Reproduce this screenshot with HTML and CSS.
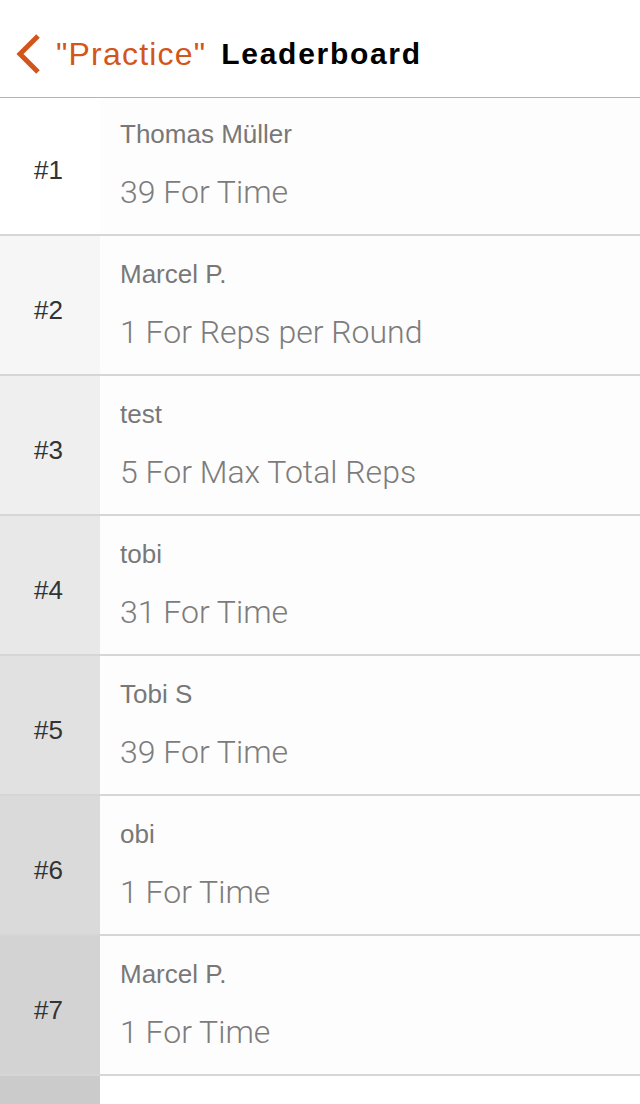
FILE: index.html
```html
<!DOCTYPE html>
<html lang="en">
<head>
<meta charset="utf-8">
<title>Leaderboard</title>
<link rel="stylesheet" href="styles.css">
</head>
<body>
<header class="navbar">
  <a class="back">
    <svg class="chevron" width="28" height="44" viewBox="0 0 28 44" aria-hidden="true">
      <path d="M24 4 L6 22 L24 40" fill="none" stroke="#d2561b" stroke-width="5" stroke-linecap="butt" stroke-linejoin="miter"/>
    </svg>
    <span class="back-label">"Practice"</span>
  </a>
  <h1 class="title">Leaderboard</h1>
</header>
<main class="list">
  <div class="row r1"><div class="rank">#1</div><div class="info"><div class="name">Thomas Müller</div><div class="score">39 For Time</div></div></div>
  <div class="row r2"><div class="rank">#2</div><div class="info"><div class="name">Marcel P.</div><div class="score">1 For Reps per Round</div></div></div>
  <div class="row r3"><div class="rank">#3</div><div class="info"><div class="name">test</div><div class="score">5 For Max Total Reps</div></div></div>
  <div class="row r4"><div class="rank">#4</div><div class="info"><div class="name">tobi</div><div class="score">31 For Time</div></div></div>
  <div class="row r5"><div class="rank">#5</div><div class="info"><div class="name">Tobi S</div><div class="score">39 For Time</div></div></div>
  <div class="row r6"><div class="rank">#6</div><div class="info"><div class="name">obi</div><div class="score">1 For Time</div></div></div>
  <div class="row r7"><div class="rank">#7</div><div class="info"><div class="name">Marcel P.</div><div class="score">1 For Time</div></div></div>
  <div class="row r8"><div class="rank"></div><div class="info"></div></div>
</main>
</body>
</html>
```

FILE: styles.css
```css
html, body {
  margin: 0;
  padding: 0;
  background: #ffffff;
  height: 1104px;
  overflow: hidden;
}

body {
  font-family: "Liberation Sans", Arial, sans-serif;
}

.navbar {
  position: relative;
  z-index: 2;
  box-sizing: border-box;
  height: 98px;
  padding: 10px 0 0 14px;
  display: flex;
  align-items: center;
  background: #ffffff;
  border-bottom: 1px solid #b4b4b4;
}

.back {
  display: flex;
  align-items: center;
  color: #d2561b;
}

.chevron {
  display: block;
  margin-right: 14px;
}

.back-label {
  font-size: 32px;
  letter-spacing: 1.2px;
  line-height: 40px;
}

.title {
  margin: 0 0 0 15px;
  font-size: 30px;
  font-weight: 700;
  letter-spacing: 1.7px;
  line-height: 40px;
  color: #000000;
}

.list {
  margin-top: -2px;
}

.row {
  display: flex;
  height: 138px;
  border-bottom: 2px solid #d6d6d6;
}

.rank {
  width: 100px;
  flex: none;
  box-sizing: border-box;
  padding: 10px 3px 0 0;
  display: flex;
  align-items: center;
  justify-content: center;
  font-size: 26px;
  color: #333333;
}

.info {
  flex: 1;
  background: #fdfdfd;
  padding: 23px 0 0 20px;
  display: flex;
  flex-direction: column;
  gap: 25px;
}

.name {
  font-size: 26px;
  line-height: 30px;
  color: #787878;
}

.score {
  font-family: Roboto, "Liberation Sans", sans-serif;
  font-weight: 300;
  font-size: 32px;
  line-height: 36px;
  color: #7c7c7c;
}

.r1 .rank { background: #ffffff; }
.r2 .rank { background: #f6f6f6; }
.r3 .rank { background: #efefef; }
.r4 .rank { background: #e8e8e8; }
.r5 .rank { background: #e1e1e1; }
.r6 .rank { background: #dadada; }
.r7 .rank { background: #d3d3d3; }
.r8 .rank { background: #cbcbcb; }
.r8 .info { background: #ffffff; }
```
